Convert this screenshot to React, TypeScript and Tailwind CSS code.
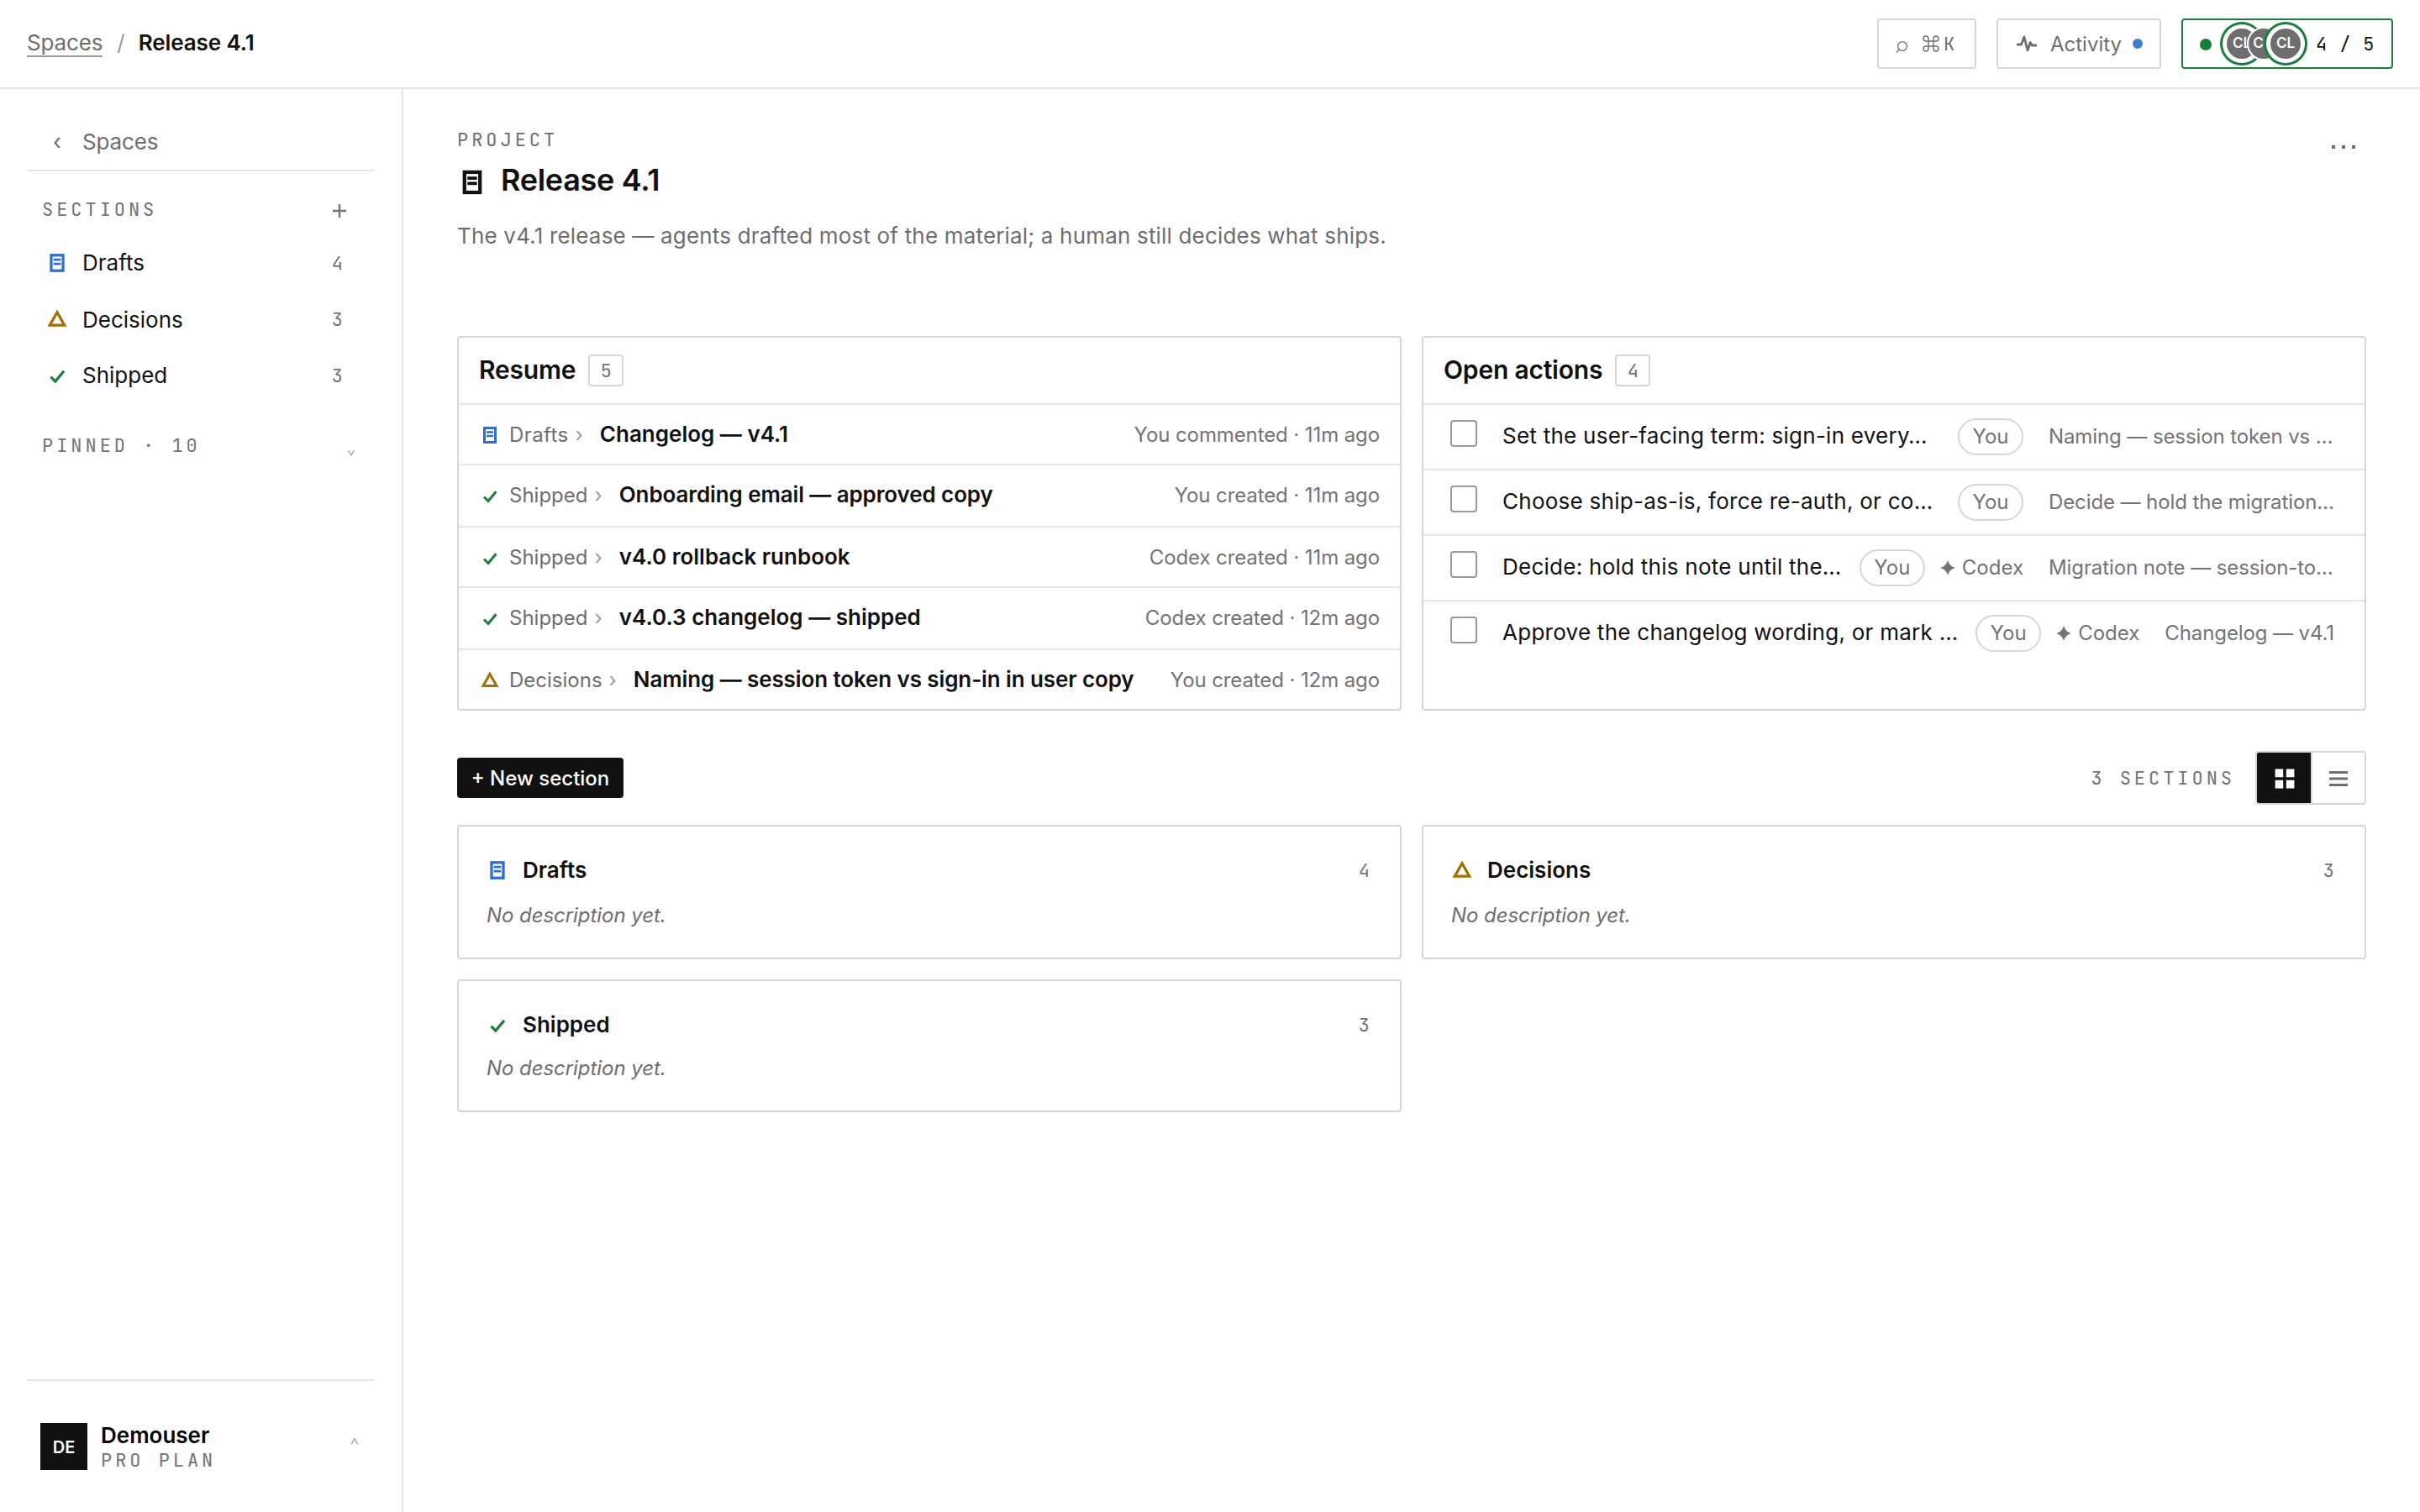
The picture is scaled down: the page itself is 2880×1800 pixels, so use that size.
import type { ReactNode } from "react";
import { clsx } from "clsx";

type IconKind = "doc" | "triangle" | "check";

const MONO = "font-['JetBrains_Mono','DejaVu_Sans_Mono',monospace]";

const SECTIONS: { icon: IconKind; name: string; count: number; row: string; card: string; gap: string }[] = [
  { icon: "doc", name: "Drafts", count: 4, row: "h-[67px]", card: "h-[160px]", gap: "mt-[13px]" },
  { icon: "triangle", name: "Decisions", count: 3, row: "h-[68px]", card: "h-[160px]", gap: "mt-[13px]" },
  { icon: "check", name: "Shipped", count: 3, row: "h-[65px]", card: "h-[158px]", gap: "mt-[11px]" },
];

const RESUME: { icon: IconKind; section: string; title: string; meta: string; row: string; tight?: boolean }[] = [
  { icon: "doc", section: "Drafts", title: "Changelog — v4.1", meta: "You commented · 11m ago", row: "h-[72px] border-b-2" },
  { icon: "check", section: "Shipped", title: "Onboarding email — approved copy", meta: "You created · 11m ago", row: "h-[74px] border-b-2", tight: true },
  { icon: "check", section: "Shipped", title: "v4.0 rollback runbook", meta: "Codex created · 11m ago", row: "h-[72px] border-b-2" },
  { icon: "check", section: "Shipped", title: "v4.0.3 changelog — shipped", meta: "Codex created · 12m ago", row: "h-[74px] border-b-2" },
  { icon: "triangle", section: "Decisions", title: "Naming — session token vs sign-in in user copy", meta: "You created · 12m ago", row: "h-[70px]", tight: true },
];

const ACTIONS = [
  { text: "Set the user-facing term: sign-in every…", codex: false, source: "Naming — session token vs …", fixed: true },
  { text: "Choose ship-as-is, force re-auth, or co…", codex: false, source: "Decide — hold the migration…", fixed: true },
  { text: "Decide: hold this note until the…", codex: true, source: "Migration note — session-to…", fixed: true },
  { text: "Approve the changelog wording, or mark …", codex: true, source: "Changelog — v4.1", fixed: false },
];

function SectionIcon({ kind, className }: { kind: IconKind; className?: string }) {
  return (
    <svg
      viewBox="0 0 12 12"
      fill="none"
      stroke="currentColor"
      strokeWidth="1.5"
      className={clsx(
        "shrink-0",
        kind === "doc" && "text-[#2a6fd0]",
        kind === "triangle" && "text-[#a66f00]",
        kind === "check" && "text-[#1a7f3c]",
        className
      )}
    >
      {kind === "doc" && (
        <>
          <rect x="2.75" y="1.75" width="6.5" height="8.5" />
          <path d="M4 4.25h4M4 6.5h4" strokeWidth="1.3" />
        </>
      )}
      {kind === "triangle" && <path d="M6 2.2 10 9.25H2z" />}
      {kind === "check" && <path d="M2.5 6.75 5 9.25 9.7 3.6" />}
    </svg>
  );
}

function Avatar({ label, ring }: { label: string; ring?: boolean }) {
  return (
    <span
      className={clsx(
        "relative -ml-[14px] flex size-10 shrink-0 items-center justify-center rounded-full border-2 border-white bg-[#6e6e6e] text-[17px] font-semibold text-white first:ml-0",
        ring && "shadow-[0_0_0_3px_#fff,0_0_0_6px_#1a7f3c]"
      )}
    >
      {label}
    </span>
  );
}

function TopBar() {
  return (
    <header className="flex h-[106px] items-center border-b-2 border-[#e5e5e5] bg-white px-8">
      <nav className="flex items-center text-[26px] leading-[30px]">
        <a className="border-b-2 border-[#9a9a9e] tracking-[-0.15px] text-[#6e6e6e]">Spaces</a>
        <span className="mr-4 ml-[17px] border-b-2 border-transparent text-[#9a9a9e]">/</span>
        <span className="border-b-2 border-transparent font-semibold tracking-[-0.1px]">Release 4.1</span>
      </nav>

      <div className="ml-auto flex gap-6 text-[#6e6e6e]">
        <button className={`${MONO} flex h-[60px] w-[118px] items-center rounded border-2 border-[#d6d6d6] pl-[19px] text-[22px]`}>
          <svg viewBox="0 0 16 16" className="mt-2 size-4" fill="none" stroke="currentColor" strokeWidth="1.3">
            <circle cx="9" cy="7" r="5.4" />
            <path d="m5.3 11-3.6 3.6" />
          </svg>
          <svg viewBox="0 0 20 20" className="ml-[17px] size-5" fill="none" stroke="currentColor" strokeWidth="1.4">
            <path d="M7 7V4a3 3 0 1 0-3 3h12a3 3 0 1 0-3-3v12a3 3 0 1 0 3-3H4a3 3 0 1 0 3 3z" />
          </svg>
          <span className="ml-[5px]">K</span>
        </button>

        <button className="flex h-[60px] w-[196px] items-center rounded border-2 border-[#d6d6d6] pl-[22px] text-2xl">
          <svg
            viewBox="0 0 24 24"
            className="size-6"
            fill="none"
            stroke="currentColor"
            strokeWidth="2.8"
            strokeLinecap="round"
            strokeLinejoin="round"
          >
            <path d="M1 13h4.5L9 4l4 16 3.2-9.5L18 14h5" />
          </svg>
          <span className="mt-0.5 ml-4">Activity</span>
          <span className="ml-[13px] size-3 rounded-full bg-[#3f7fd0]" />
        </button>

        <button className="flex h-[60px] w-[252px] items-center rounded border-2 border-[#1a7f3c] pl-5">
          <span className="mt-0.5 size-3.5 rounded-full bg-[#1a7f3c]" />
          <span className="ml-4 flex">
            <Avatar label="CL" ring />
            <Avatar label="CO" />
            <Avatar label="CL" ring />
          </span>
          <span className={`${MONO} ml-4 text-[22px] tracking-[0.04em] whitespace-pre text-[#111]`}>4 / 5</span>
        </button>
      </div>
    </header>
  );
}

function Sidebar() {
  return (
    <aside className="flex w-[480px] shrink-0 flex-col border-r-2 border-[#e5e5e5] px-8 pt-7">
      <a className="flex h-[70px] items-center rounded-bl border-b-2 border-[#e5e5e5] pt-px pl-4 text-[26px] text-[#6e6e73]">
        <span className="w-10 text-center">‹</span>
        <span className="ml-2.5 tracking-[-0.15px]">Spaces</span>
      </a>

      <div className={`${MONO} mt-3.5 flex h-[61px] items-center pt-px pr-[34px] pl-[18px] text-[22px] tracking-[0.18em] text-[#737377]`}>
        SECTIONS
        <svg viewBox="0 0 16 16" className="mt-[3px] ml-auto size-4" stroke="currentColor" strokeWidth="2.4">
          <path d="M0 8h16M8 0v16" />
        </svg>
      </div>

      {SECTIONS.map((s) => (
        <a key={s.name} className={clsx("flex items-center pr-[38px] pl-[23px] text-[26px]", s.row)}>
          <SectionIcon kind={s.icon} className="size-[26px]" />
          <span className="ml-[17px]">{s.name}</span>
          <span className={`${MONO} ml-auto pt-px text-[22px] text-[#737377]`}>{s.count}</span>
        </a>
      ))}

      <div className={`${MONO} mt-[21px] flex h-[60px] items-center pr-6 pl-[18px] text-[22px] tracking-[0.18em] text-[#737377]`}>
        PINNED · 10
        <svg viewBox="0 0 8 7" className="mt-[18px] ml-auto h-[7px] w-2" fill="none" stroke="#9a9a9e" strokeWidth="1.2">
          <path d="m.5 0 3.5 6 3.5-6" />
        </svg>
      </div>

      <div className="mt-auto flex h-[158px] items-start border-t-2 border-[#e5e5e5] px-4 pt-[50px]">
        <span className="flex size-14 items-center justify-center bg-[#111] pt-0.5 text-[20px] font-semibold text-white">DE</span>
        <span className="ml-4 flex flex-col">
          <span className="text-[26px] leading-[30px] font-semibold text-black">Demouser</span>
          <span className={`${MONO} text-[22px] leading-[30px] tracking-[0.18em] text-[#737377]`}>PRO PLAN</span>
        </span>
        <svg viewBox="0 0 8 8" className="mt-[18px] mr-1 ml-auto size-2" fill="none" stroke="#9a9a9e" strokeWidth="1.2">
          <path d="m.3 7.5 3.7-7 3.7 7" />
        </svg>
      </div>
    </aside>
  );
}

function Panel({ title, count, children }: { title: string; count: number; children: ReactNode }) {
  return (
    <section className="h-[446px] rounded border-2 border-[#d6d6d6]">
      <div className="flex h-20 items-center border-b-2 border-[#e5e5e5] px-6">
        <h2 className="pb-0.5 text-[30px] font-semibold tracking-[-0.2px]">{title}</h2>
        <span
          className={`${MONO} ml-[15px] flex h-[38px] w-[42px] items-center justify-center rounded border-2 border-[#d6d6d6] text-[22px] text-[#737377]`}
        >
          {count}
        </span>
      </div>
      {children}
    </section>
  );
}

export default function App() {
  return (
    <div className="flex h-[1800px] w-[2880px] flex-col overflow-hidden bg-[#fefefe] font-['Inter',sans-serif] text-[#111]">
      <TopBar />

      <div className="flex min-h-0 flex-1">
        <Sidebar />

        <main className="flex-1 px-16 pt-[47px]">
          {/* Project heading */}
          <div className="flex items-start justify-between">
            <div>
              <p className={`${MONO} text-[22px] leading-7 tracking-[0.18em] text-[#6e6e6e]`}>PROJECT</p>
              <h1 className="mt-[11px] flex items-center text-[36px] leading-[44px] font-semibold">
                <SectionIcon kind="doc" className="mt-[6px] ml-[1px] size-[34px] text-[#111]!" />
                <span className="ml-[17px] tracking-[-0.3px]">Release 4.1</span>
              </h1>
              <p className="mt-6 text-[26px] leading-[42px] tracking-[0.18px] text-[#6e6e6e]">
                The v4.1 release — agents drafted most of the material; a human still decides what ships.
              </p>
            </div>
            <svg viewBox="0 0 28 4" className="mt-5 mr-[13px] h-1 w-7 fill-[#6e6e6e]">
              <path d="M0 0h4v4H0zM12 0h4v4h-4zM24 0h4v4h-4z" />
            </svg>
          </div>

          <div className="mt-[98px] grid grid-cols-2 gap-6">
            <Panel title="Resume" count={5}>
              {RESUME.map((r) => (
                <div key={r.title} className={clsx("border-[#e5e5e5]", r.row)}>
                  <div className="flex h-[70px] items-center px-6 pt-px text-2xl text-[#6e6e6e]">
                    <SectionIcon kind={r.icon} className="mx-[1px] mt-px size-6" />
                    <span className={clsx("ml-2.5", r.icon === "doc" && "tracking-[0.4px]")}>{r.section}</span>
                    <span className="ml-2 text-[#9a9a9e]">›</span>
                    <span
                      className={clsx("ml-5 text-[26px] font-semibold text-[#111]", r.tight && "tracking-[-0.11px]")}
                    >
                      {r.title}
                    </span>
                    <span className="ml-auto tracking-[-0.1px] text-[#737377]">{r.meta}</span>
                  </div>
                </div>
              ))}
            </Panel>

            <Panel title="Open actions" count={4}>
              {ACTIONS.map((a) => (
                <div key={a.text} className="flex h-[78px] items-start border-b-2 border-[#e5e5e5] pr-9 pl-8 last:border-b-0">
                  <span className="mt-[18px] size-8 shrink-0 rounded border-2 border-[#9a9a9e]" />
                  <span className="mt-4 ml-[30px] flex-1 text-[26px] leading-[42px] tracking-[0.01em] whitespace-nowrap">{a.text}</span>
                  <span className="mt-4 flex h-11 w-[78px] items-center justify-center rounded-full border-2 border-[#d6d6d6] text-2xl text-[#737377]">
                    You
                  </span>
                  {a.codex && (
                    <span className="mt-4 ml-[18px] flex h-11 items-center text-2xl text-[#737377]">
                      <svg viewBox="0 0 18 18" className="mr-2 size-[18px] fill-current">
                        <path d="M9 0q1.8 7.2 9 9-7.2 1.8-9 9-1.8-7.2-9-9 7.2-1.8 9-9z" />
                      </svg>
                      Codex
                    </span>
                  )}
                  <span
                    className={clsx(
                      "mt-4 ml-[30px] text-2xl leading-[44px] tracking-[-0.1px] whitespace-nowrap text-[#737377]",
                      a.fixed && "w-[340px]"
                    )}
                  >
                    {a.source}
                  </span>
                </div>
              ))}
            </Panel>
          </div>

          {/* Section toolbar */}
          <div className="mt-12 flex h-16 items-center">
            <button className="flex h-12 w-[198px] items-center justify-center rounded bg-[#111] pt-0.5 text-2xl font-medium text-white">
              + New section
            </button>
            <span className={`${MONO} ml-auto text-[22px] tracking-[0.18em] text-[#737377]`}>3 SECTIONS</span>
            <div className="ml-6 flex h-16 w-[132px] overflow-hidden rounded border-2 border-[#d6d6d6]">
              <button className="flex w-[66px] items-center justify-center border-r-2 border-[#d6d6d6] bg-[#111]">
                <svg viewBox="0 0 24 24" className="mt-0.5 ml-0.5 size-6 fill-white">
                  <path d="M.6.6h9.6v9.6H.6zM13.8.6h9.6v9.6h-9.6zM.6 13.8h9.6v9.6H.6zM13.8 13.8h9.6v9.6h-9.6z" />
                </svg>
              </button>
              <button className="flex flex-1 items-center justify-center">
                <svg viewBox="0 0 22 18" className="mt-0.5 h-[18px] w-[22px]" stroke="#6e6e6e" strokeWidth="2.8">
                  <path d="M0 1.5h22M0 9h22M0 16.5h22" />
                </svg>
              </button>
            </div>
          </div>

          <div className="mt-6 grid grid-cols-2 items-start gap-6">
            {SECTIONS.map((s) => (
              <article key={s.name} className={clsx("rounded border-2 border-[#d6d6d6] pt-8 pr-9 pl-[33px]", s.card)}>
                <div className="flex h-10 items-center">
                  <SectionIcon kind={s.icon} className="size-[26px]" />
                  <h3 className="ml-[17px] pb-0.5 text-[26px] font-semibold">{s.name}</h3>
                  <span className={`${MONO} ml-auto text-[22px] text-[#737377]`}>{s.count}</span>
                </div>
                <p className={clsx("text-2xl leading-[42px] tracking-[-0.06px] text-[#6e6e6e] italic", s.gap)}>
                  No description yet.
                </p>
              </article>
            ))}
          </div>
        </main>
      </div>
    </div>
  );
}
